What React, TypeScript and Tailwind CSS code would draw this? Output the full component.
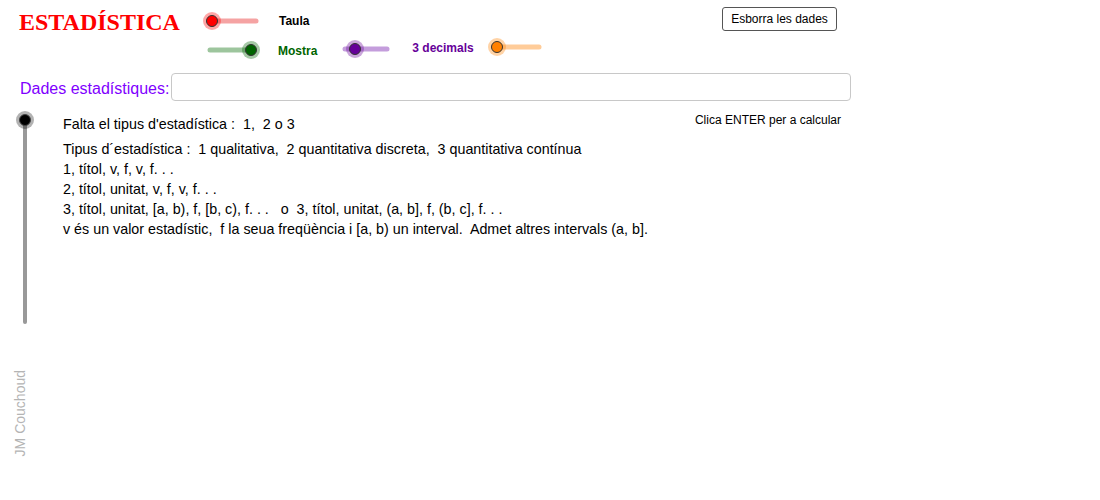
import React from 'react';

type SliderProps = {
  width: number;
  lineFrom: number;
  lineTo: number;
  knob: number;
  color: string;
  line: string;
  halo: string;
};

function Slider({ width, lineFrom, lineTo, knob, color, line, halo }: SliderProps) {
  return (
    <svg width={width} height={20} className="block shrink-0">
      <line x1={lineFrom} y1={10} x2={lineTo} y2={10} stroke={line} strokeWidth={5} strokeLinecap="round" />
      <circle cx={knob} cy={10} r={9} fill={halo} />
      <circle cx={knob} cy={10} r={5.5} fill={color} stroke="#333" strokeWidth={1} />
    </svg>
  );
}

export default function App() {
  return (
    <div className="relative w-[1100px] h-[500px] bg-white overflow-hidden font-['Liberation_Sans',Arial,sans-serif] text-black">
      {/* first row */}
      <div className="flex items-start h-[36px]">
        <div className="ml-[19px] mt-[10px] text-[24px] leading-[24px] font-bold text-[#ff0000] font-['Liberation_Serif','Times_New_Roman',serif]">
          ESTADÍSTICA
        </div>
        <div className="ml-[22px] mt-[11px]">
          <Slider width={60} lineFrom={10} lineTo={54} knob={10} color="#ff0000" line="#f5a3a3" halo="rgba(255,0,0,0.35)" />
        </div>
        <div className="ml-[17px] mt-[14px] text-[12px] leading-[14px] font-bold">Taula</div>
        <button className="ml-auto mr-[263px] mt-[7px] w-[115px] h-[24px] border border-[#555] rounded-[3px] bg-white text-[12px] leading-[14px] text-black">
          Esborra les dades
        </button>
      </div>

      {/* second row */}
      <div className="flex items-start h-[37px]">
        <div className="ml-[200px] mt-[4px]">
          <Slider width={61} lineFrom={10} lineTo={51} knob={51} color="#006400" line="#9dc59d" halo="rgba(0,100,0,0.35)" />
        </div>
        <div className="ml-[17px] mt-[8px] text-[12px] leading-[14px] font-bold text-[#006400]">Mostra</div>
        <div className="ml-[18px] mt-[3px]">
          <Slider width={62} lineFrom={10} lineTo={52} knob={20} color="#660099" line="#c49ddc" halo="rgba(102,0,153,0.35)" />
        </div>
        <div className="ml-[15px] mt-[5px] text-[12px] leading-[14px] font-bold text-[#660099]">3 decimals</div>
        <div className="ml-[13px] mt-[1px]">
          <Slider width={62} lineFrom={10} lineTo={52} knob={10} color="#ff8000" line="#ffcc99" halo="rgba(255,128,0,0.35)" />
        </div>
      </div>

      {/* input row */}
      <div className="flex items-center h-[28px]">
        <div className="ml-[20px] mt-[4px] text-[16px] leading-[18px] text-[#8000ff]">Dades estadístiques:</div>
        <div className="ml-[2px] w-[680px] h-[28px] border border-[#c8c8c8] rounded-[4px] bg-white" />
      </div>

      {/* body */}
      <div className="flex items-start">
        <div className="flex flex-col ml-[16px] mt-[10px]">
          <svg width={18} height={220} className="block">
            <line x1={9} y1={9} x2={9} y2={211} stroke="#999" strokeWidth={4} strokeLinecap="round" />
            <circle cx={9} cy={9} r={9} fill="rgba(0,0,0,0.3)" />
            <circle cx={9} cy={9} r={5.5} fill="#000" stroke="#444" strokeWidth={1} />
          </svg>
          <div className="mt-[39px] -ml-[4px] w-[16px] text-[14px] leading-[16px] text-[#b4b4b4] [writing-mode:vertical-rl] rotate-180">
            JM Couchoud
          </div>
        </div>
        <div className="ml-[29px] mt-[13px] text-[14.3px] leading-[20px]">
          <div className="mb-[5px]">Falta el tipus d'estadística :&nbsp; 1,&nbsp; 2 o 3</div>
          <div>Tipus d´estadística :&nbsp; 1 qualitativa,&nbsp; 2 quantitativa discreta,&nbsp; 3 quantitativa contínua</div>
          <div>1, títol, v, f, v, f. . .</div>
          <div>2, títol, unitat, v, f, v, f. . .</div>
          <div>3, títol, unitat, [a, b), f, [b, c), f. . . &nbsp; o &nbsp;3, títol, unitat, (a, b], f, (b, c], f. . .</div>
          <div>v és un valor estadístic,&nbsp; f la seua freqüència i [a, b) un interval.&nbsp; Admet altres intervals (a, b].</div>
        </div>
        <div className="ml-auto mr-[259px] mt-[12px] text-[12px] leading-[14px]">Clica ENTER per a calcular</div>
      </div>
    </div>
  );
}
